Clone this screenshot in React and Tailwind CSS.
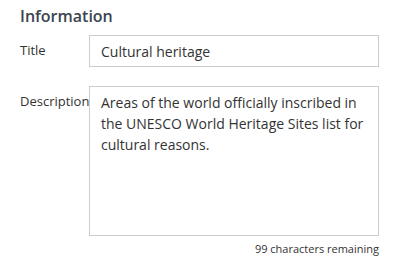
export default function App() {
  return (
    <div className="w-[398px] h-[265px] bg-white pl-5 pt-[5px]" style={{ fontFamily: '"Open Sans", sans-serif' }}>
      <h2 className="text-[16px] leading-[22px] font-semibold text-[#3b4450]">Information</h2>
      <div className="flex items-center mt-2">
        <label className="w-[69px] text-[13px] text-[#333]">Title</label>
        <div className="w-[290px] h-[32px] border border-[#cccccc] flex items-center px-[11px] text-[14px] text-[#333]">Cultural heritage</div>
      </div>
      <div className="flex mt-[19px]">
        <label className="w-[69px] text-[13px] text-[#333] pt-[6px] whitespace-nowrap">Description</label>
        <div className="w-[290px] h-[150px] border border-[#cccccc] px-[11px] pt-[5px] text-[14px] leading-[21px] text-[#333]">
          Areas of the world officially inscribed in the UNESCO World Heritage Sites list for cultural reasons.
        </div>
      </div>
      <div className="w-[359px] text-right text-[11px] text-[#333] mt-[5px] leading-[15px]">99 characters remaining</div>
    </div>
  );
}
